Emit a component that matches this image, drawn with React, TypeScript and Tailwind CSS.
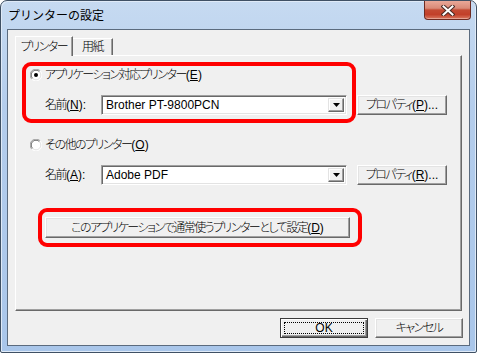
import React from "react";

const FONT =
  "[font-family:'Liberation_Sans','Noto_Sans_CJK_JP',sans-serif] [font-feature-settings:'palt'] text-[12px] leading-[14px] text-black";

const JP = "tracking-[-1.5px] font-light";

function Mn({ k, after = "" }: { k: string; after?: string }) {
  return (
    <span className="tracking-normal">
      (<u>{k}</u>){after}
    </span>
  );
}

function Btn({
  children,
  className = "",
  isDefault = false,
}: {
  children: React.ReactNode;
  className?: string;
  isDefault?: boolean;
}) {
  if (isDefault) {
    return (
      <div
        className={`flex items-center justify-center bg-[#f0f0f0] border border-[#3c3c3c] shadow-[inset_1px_1px_0_#ffffff,inset_-1px_-1px_0_#696969,inset_-2px_-2px_0_#a0a0a0] p-[3px] ${className}`}
      >
        <div className="flex h-full w-full items-center justify-center border border-dotted border-black">
          {children}
        </div>
      </div>
    );
  }
  return (
    <div
      className={`flex items-center justify-center bg-[#f0f0f0] border border-t-white border-l-white border-r-[#696969] border-b-[#696969] shadow-[inset_-1px_-1px_0_#a0a0a0,inset_1px_1px_0_#e3e3e3] ${className}`}
    >
      {children}
    </div>
  );
}

function Select({ value }: { value: string }) {
  return (
    <div className="flex h-[20px] w-[246px] items-stretch bg-white border border-t-[#a0a0a0] border-l-[#a0a0a0] border-r-white border-b-white shadow-[inset_1px_1px_0_#696969,inset_-1px_-1px_0_#e3e3e3] p-[2px]">
      <div className="flex flex-1 items-center pl-[2px]">{value}</div>
      <div className="flex w-[16px] items-center justify-center bg-[#f0f0f0] border border-t-[#e3e3e3] border-l-[#e3e3e3] border-r-[#696969] border-b-[#696969] shadow-[inset_-1px_-1px_0_#a0a0a0,inset_1px_1px_0_#ffffff]">
        <svg width="7" height="4" viewBox="0 0 7 4">
          <path d="M0 0H7L3.5 4Z" fill="#000" />
        </svg>
      </div>
    </div>
  );
}

function Radio({ checked }: { checked: boolean }) {
  return (
    <svg width="12" height="12" viewBox="0 0 12 12" className="shrink-0">
      <circle cx="6" cy="6" r="5.5" fill="#fff" />
      <path d="M1.8 10.2A5.5 5.5 0 0 1 10.2 1.8" fill="none" stroke="#a0a0a0" strokeWidth="1" />
      <path d="M2.6 9.4A4.5 4.5 0 0 1 9.4 2.6" fill="none" stroke="#696969" strokeWidth="1" />
      <path d="M10.2 1.8A5.5 5.5 0 0 1 1.8 10.2" fill="none" stroke="#ffffff" strokeWidth="1" />
      <path d="M9.4 2.6A4.5 4.5 0 0 1 2.6 9.4" fill="none" stroke="#e3e3e3" strokeWidth="1" />
      {checked && <circle cx="6" cy="6" r="2" fill="#000" />}
    </svg>
  );
}

export default function App() {
  return (
    <div className={`${FONT} h-[353px] w-[477px] overflow-hidden`}>
      <div className="flex h-[353px] w-[477px] flex-col rounded-t-[7px] rounded-b-[2px] border border-[#3f5064] bg-[linear-gradient(180deg,#c6daf1_0%,#b4cdec_30%,#a9c6ea_100%)] shadow-[inset_1px_1px_0_#dfeaf7,inset_-1px_-1px_0_#dfeaf7]">
        {/* Title bar */}
        <div className="flex h-[28px] items-start justify-between">
          <div className="pl-[7px] pt-[7px] text-[12px] leading-[16px] [font-feature-settings:normal] text-black">
            プリンターの設定
          </div>
          <div className="mr-[5px] flex h-[19px] w-[47px] items-center justify-center rounded-b-[4px] border border-t-0 border-[#6e2b22] bg-[linear-gradient(180deg,#e9a898_0%,#d98a78_40%,#c44a33_50%,#c2402a_75%,#da7860_100%)] shadow-[inset_0_-1px_0_rgba(255,255,255,0.35)]">
            <svg width="14" height="11" viewBox="0 0 14 11">
              <path d="M2.5 1.5L11.5 9.5M11.5 1.5L2.5 9.5" stroke="#4a2a24" strokeWidth="4" strokeLinecap="square" />
              <path d="M2.5 1.5L11.5 9.5M11.5 1.5L2.5 9.5" stroke="#ffffff" strokeWidth="2" strokeLinecap="square" />
            </svg>
          </div>
        </div>

        {/* Client area */}
        <div className="mx-[6px] mb-[6px] flex flex-1 flex-col border border-[#5b6b7e] bg-[#f0f0f0] px-[7px] pt-[6px]">
          {/* Tabs */}
          <div className={`flex h-[19px] items-end ${JP}`}>
            <div className="relative z-10 -mb-px flex h-[20px] w-[58px] items-start justify-center border-l border-t border-r border-l-white border-t-white border-r-[#696969] bg-[#f0f0f0] pt-[3px] shadow-[inset_-1px_0_0_#a0a0a0]">
              プリンター
            </div>
            <div className="flex h-[17px] w-[40px] items-start justify-center border-t border-r border-t-white border-r-[#696969] pt-[1px] shadow-[inset_-1px_0_0_#a0a0a0]">
              用紙
            </div>
          </div>

          {/* Panel */}
          <div className="flex h-[256px] flex-col border border-t-white border-l-white border-r-[#696969] border-b-[#696969] shadow-[inset_-1px_-1px_0_#a0a0a0]">
            {/* Group 1 */}
            <div className="ml-[6px] mt-[6px] flex items-end">
              <div className="flex h-[61px] w-[334px] flex-col rounded-[9px] border-[4px] border-[#ff0000]">
                <div className="flex h-[18px] items-center gap-[3px] pl-[4px]">
                  <Radio checked />
                  <span className={JP}>
                    アプリケーション対応プリンター<Mn k="E" />
                  </span>
                </div>
                <div className="mt-[11px] flex h-[20px] items-center pl-[19px]">
                  <span className={`w-[56px] ${JP}`}>
                    名前<Mn k="N" after=":" />
                  </span>
                  <Select value="Brother PT-9800PCN" />
                </div>
              </div>
              <Btn className="mb-[8px] ml-[1px] h-[20px] w-[90px]">
                <span className={JP}>
                  プロパティ<Mn k="P" after="..." />
                </span>
              </Btn>
            </div>

            {/* Group 2 */}
            <div className="mt-[13px] flex h-[18px] items-center gap-[3px] pl-[14px]">
              <Radio checked={false} />
              <span className={JP}>
                その他のプリンター<Mn k="O" />
              </span>
            </div>
            <div className="mt-[11px] flex h-[20px] items-center pl-[29px]">
              <span className={`w-[56px] ${JP}`}>
                名前<Mn k="A" after=":" />
              </span>
              <Select value="Adobe PDF" />
              <Btn className="ml-[10px] h-[20px] w-[90px]">
                <span className={JP}>
                  プロパティ<Mn k="R" after="..." />
                </span>
              </Btn>
            </div>

            {/* Group 3 */}
            <div className="ml-[22px] mt-[23px] flex h-[39px] w-[324px] items-start rounded-[9px] border-[4px] border-[#ff0000] pl-[3px] pt-[5px]">
              <Btn className="h-[21px] w-[305px]">
                <span className={JP}>
                  このアプリケーションで通常使うプリンターとして設定<Mn k="D" />
                </span>
              </Btn>
            </div>
          </div>

          {/* Bottom buttons */}
          <div className="-mr-px mt-[7px] flex justify-end gap-[7px]">
            <Btn isDefault className="h-[20px] w-[88px]">
              <span>OK</span>
            </Btn>
            <Btn className="h-[20px] w-[88px]">
              <span className={JP}>キャンセル</span>
            </Btn>
          </div>
        </div>
      </div>
    </div>
  );
}
